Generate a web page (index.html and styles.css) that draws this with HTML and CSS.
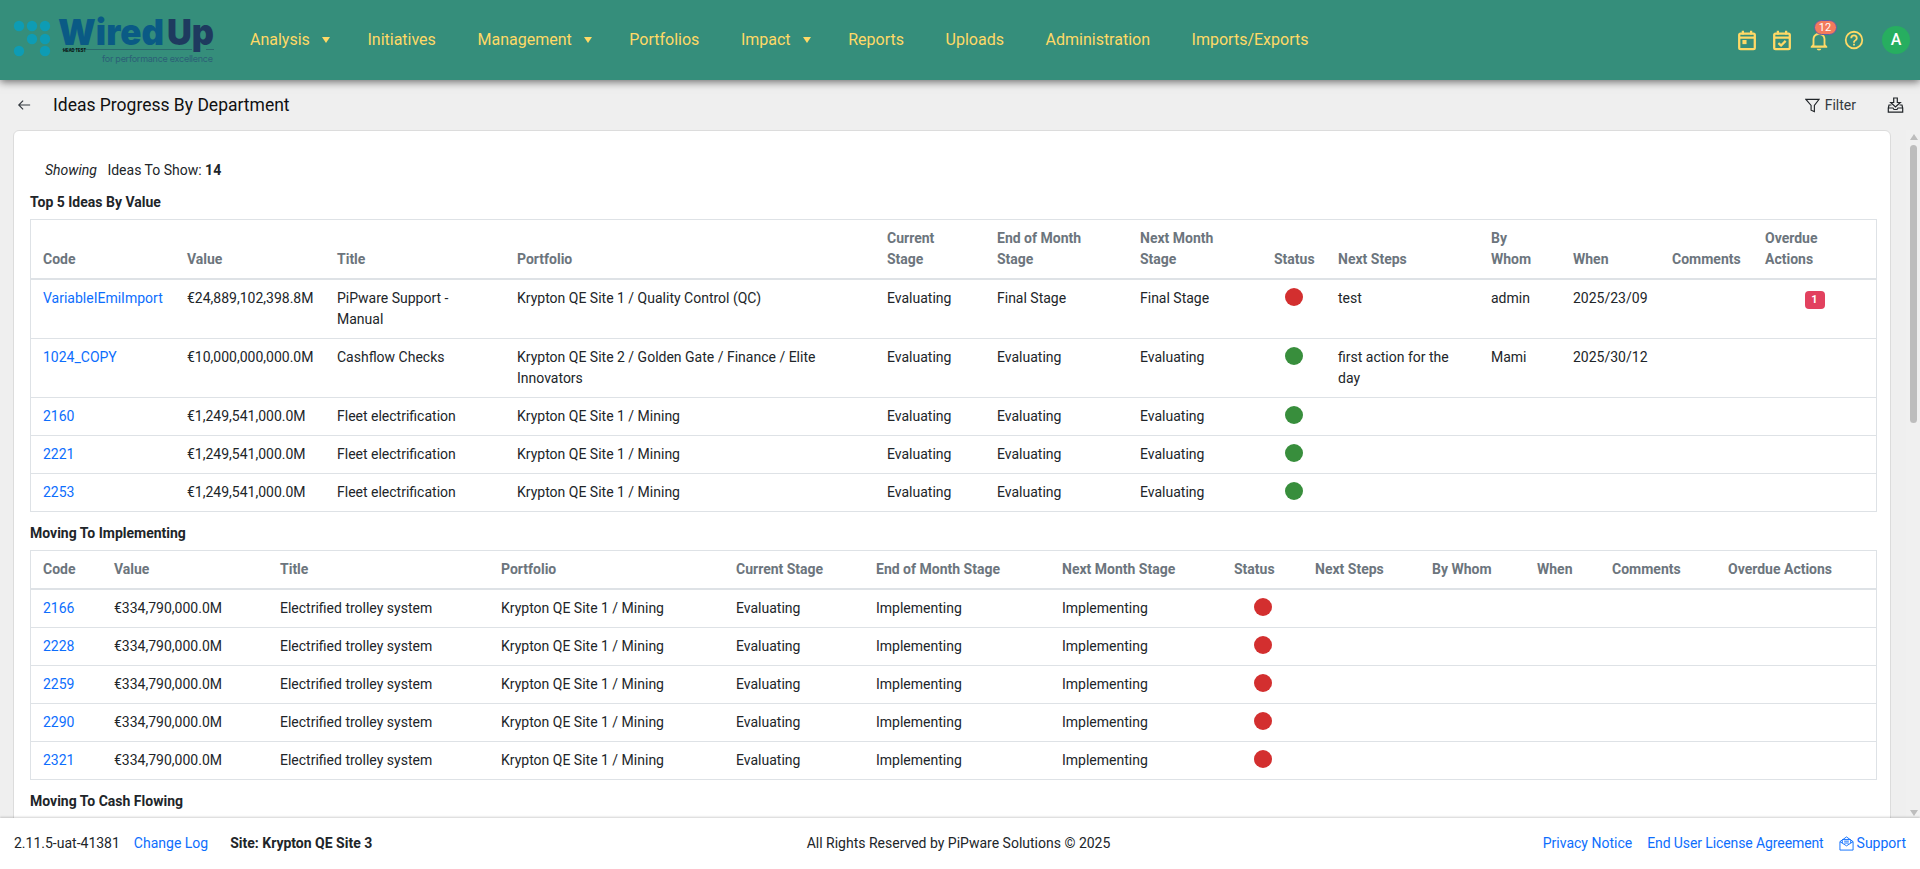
FILE: index.html
```html
<!DOCTYPE html>
<html lang="en">
<head>
<meta charset="utf-8">
<title>Ideas Progress By Department</title>
<link rel="stylesheet" href="styles.css">
</head>
<body>
<header class="topbar">
  <svg class="logo" viewBox="0 0 240 80" width="240" height="80">
    <g class="logo-dots">
      <circle cx="19" cy="26" r="5.2"/><circle cx="32" cy="26" r="5.2"/><circle cx="45" cy="26" r="5.2"/>
      <circle cx="32" cy="39" r="5.2"/><circle cx="45" cy="39" r="5.2"/>
      <circle cx="19" cy="51" r="5.2"/><circle cx="45" cy="51" r="5.2"/>
    </g>
    <text class="logo-wired" x="58" y="45" textLength="106" lengthAdjust="spacingAndGlyphs">Wired</text>
    <text class="logo-up" x="167" y="45" textLength="47" lengthAdjust="spacingAndGlyphs">Up</text>
    <path class="logo-rule" d="M62 49.5H192M206 49.5H214"/>
    <text class="logo-head" x="63" y="52" textLength="23" lengthAdjust="spacingAndGlyphs">HEAD TEST</text>
    <text class="logo-tag" x="102" y="62" textLength="111">for performance excellence</text>
  </svg>
  <nav class="mainnav">
    <a class="navitem">Analysis<span class="caret"></span></a>
    <a class="navitem">Initiatives</a>
    <a class="navitem">Management<span class="caret"></span></a>
    <a class="navitem">Portfolios</a>
    <a class="navitem">Impact<span class="caret"></span></a>
    <a class="navitem">Reports</a>
    <a class="navitem">Uploads</a>
    <a class="navitem">Administration</a>
    <a class="navitem">Imports/Exports</a>
  </nav>
  <div class="tools">
    <svg class="ticon" viewBox="0 0 24 24"><rect x="3.500" y="5" width="17" height="17" rx="1.500"/><path d="M3.500 9.500h17M7.500 2v4M16.500 2v4"/><rect class="solid" x="7" y="12" width="4.500" height="4.500"/></svg>
    <svg class="ticon" viewBox="0 0 24 24"><rect x="3.500" y="5" width="17" height="17" rx="1.500"/><path d="M3.500 9.500h17M7.500 2v4M16.500 2v4M8 15.500l3 2.500 5-5"/></svg>
    <span class="bell">
      <svg class="ticon" viewBox="0 0 24 24"><path class="solid" fill-rule="evenodd" d="M21,19V20.500H3V19L5,17V11C5,7.9 7.03,5.17 10,4.29C10,4.19 10,4.1 10,4A2,2 0 0,1 12,2A2,2 0 0,1 14,4C14,4.1 14,4.19 14,4.29C16.97,5.17 19,7.9 19,11V17L21,19ZM17,18V11C17,8.24 14.76,6.500 12,6.500C9.24,6.500 7,8.24 7,11V18H17ZM14.500,21.500A2.500,2 0 0,1 12,23.500A2.500,2 0 0,1 9.500,21.500H14.500Z"/></svg>
      <span class="bell-count">12</span>
    </span>
    <svg class="ticon" viewBox="0 0 24 24"><path class="solid" d="M11,18H13V16H11V18M12,2A10,10 0 0,0 2,12A10,10 0 0,0 12,22A10,10 0 0,0 22,12A10,10 0 0,0 12,2M12,20C7.59,20 4,16.41 4,12C4,7.59 7.59,4 12,4C16.41,4 20,7.59 20,12C20,16.41 16.41,20 12,20M12,6A4,4 0 0,0 8,10H10A2,2 0 0,1 12,8A2,2 0 0,1 14,10C14,12 11,11.75 11,15H13C13,12.75 16,12.5 16,10A4,4 0 0,0 12,6Z"/></svg>
    <span class="avatar">A</span>
  </div>
</header>

<div class="subbar">
  <svg class="back" viewBox="0 0 16 16"><path d="M15 8H2M7 3L2 8l5 5"/></svg>
  <h1 class="pagetitle">Ideas Progress By Department</h1>
  <div class="subactions">
    <span class="filter">
      <svg class="sicon funnel" viewBox="0 0 16 16"><path d="M1 1.500h14L10 8v6.500L6.500 13V8z"/></svg>
      Filter
    </span>
    <svg class="sicon dl" viewBox="0 0 16 16"><path d="M6.200 1h3.600v4.500h3L8 10 3.200 5.500h3z"/><path d="M4 8H1.500L.8 11v4.200h14.400V11l-.7-3H12M.8 11h4.700l1 1.500h3l1-1.500h4.700"/></svg>
  </div>
</div>

<div class="workspace">
  <main class="scroller">
    <section class="card">
      <p class="showing"><em class="showing-label">Showing</em> Ideas To Show: <strong>14</strong></p>

      <h2 class="sectitle">Top 5 Ideas By Value</h2>
      <div class="tablebox">
        <table class="grid first">
          <colgroup><col><col><col><col><col><col><col><col><col><col><col><col><col></colgroup>
          <thead><tr><th>Code</th><th>Value</th><th>Title</th><th>Portfolio</th><th>Current Stage</th><th>End of Month Stage</th><th>Next Month Stage</th><th>Status</th><th>Next Steps</th><th>By Whom</th><th>When</th><th>Comments</th><th>Overdue Actions</th></tr></thead>
          <tbody>
            <tr><td><a class="lnk">VariableIEmiImport</a></td><td>€24,889,102,398.8M</td><td>PiPware Support - Manual</td><td>Krypton QE Site 1 / Quality Control (QC)</td><td>Evaluating</td><td>Final Stage</td><td>Final Stage</td><td><span class="dot red"></span></td><td>test</td><td>admin</td><td>2025/23/09</td><td></td><td><span class="overdue">1</span></td></tr>
            <tr><td><a class="lnk">1024_COPY</a></td><td>€10,000,000,000.0M</td><td>Cashflow Checks</td><td>Krypton QE Site 2 / Golden Gate / Finance / Elite Innovators</td><td>Evaluating</td><td>Evaluating</td><td>Evaluating</td><td><span class="dot green"></span></td><td>first action for the day</td><td>Mami</td><td>2025/30/12</td><td></td><td></td></tr>
            <tr><td><a class="lnk">2160</a></td><td>€1,249,541,000.0M</td><td>Fleet electrification</td><td>Krypton QE Site 1 / Mining</td><td>Evaluating</td><td>Evaluating</td><td>Evaluating</td><td><span class="dot green"></span></td><td></td><td></td><td></td><td></td><td></td></tr>
            <tr><td><a class="lnk">2221</a></td><td>€1,249,541,000.0M</td><td>Fleet electrification</td><td>Krypton QE Site 1 / Mining</td><td>Evaluating</td><td>Evaluating</td><td>Evaluating</td><td><span class="dot green"></span></td><td></td><td></td><td></td><td></td><td></td></tr>
            <tr><td><a class="lnk">2253</a></td><td>€1,249,541,000.0M</td><td>Fleet electrification</td><td>Krypton QE Site 1 / Mining</td><td>Evaluating</td><td>Evaluating</td><td>Evaluating</td><td><span class="dot green"></span></td><td></td><td></td><td></td><td></td><td></td></tr>
          </tbody>
        </table>
      </div>

      <h2 class="sectitle">Moving To Implementing</h2>
      <div class="tablebox">
        <table class="grid second">
          <colgroup><col><col><col><col><col><col><col><col><col><col><col><col><col></colgroup>
          <thead><tr><th>Code</th><th>Value</th><th>Title</th><th>Portfolio</th><th>Current Stage</th><th>End of Month Stage</th><th>Next Month Stage</th><th>Status</th><th>Next Steps</th><th>By Whom</th><th>When</th><th>Comments</th><th>Overdue Actions</th></tr></thead>
          <tbody>
            <tr><td><a class="lnk">2166</a></td><td>€334,790,000.0M</td><td>Electrified trolley system</td><td>Krypton QE Site 1 / Mining</td><td>Evaluating</td><td>Implementing</td><td>Implementing</td><td><span class="dot red"></span></td><td></td><td></td><td></td><td></td><td></td></tr>
            <tr><td><a class="lnk">2228</a></td><td>€334,790,000.0M</td><td>Electrified trolley system</td><td>Krypton QE Site 1 / Mining</td><td>Evaluating</td><td>Implementing</td><td>Implementing</td><td><span class="dot red"></span></td><td></td><td></td><td></td><td></td><td></td></tr>
            <tr><td><a class="lnk">2259</a></td><td>€334,790,000.0M</td><td>Electrified trolley system</td><td>Krypton QE Site 1 / Mining</td><td>Evaluating</td><td>Implementing</td><td>Implementing</td><td><span class="dot red"></span></td><td></td><td></td><td></td><td></td><td></td></tr>
            <tr><td><a class="lnk">2290</a></td><td>€334,790,000.0M</td><td>Electrified trolley system</td><td>Krypton QE Site 1 / Mining</td><td>Evaluating</td><td>Implementing</td><td>Implementing</td><td><span class="dot red"></span></td><td></td><td></td><td></td><td></td><td></td></tr>
            <tr><td><a class="lnk">2321</a></td><td>€334,790,000.0M</td><td>Electrified trolley system</td><td>Krypton QE Site 1 / Mining</td><td>Evaluating</td><td>Implementing</td><td>Implementing</td><td><span class="dot red"></span></td><td></td><td></td><td></td><td></td><td></td></tr>
          </tbody>
        </table>
      </div>

      <h2 class="sectitle">Moving To Cash Flowing</h2>
      <div class="tablebox tail"></div>
    </section>
  </main>
  <div class="vbar">
    <span class="vbar-btn up"></span>
    <span class="vbar-thumb"></span>
    <span class="vbar-track"></span>
    <span class="vbar-btn down"></span>
  </div>
</div>

<footer class="footer">
  <div class="foot-left">
    <span>2.11.5-uat-41381</span>
    <a class="lnk changelog">Change Log</a>
    <strong class="site">Site: Krypton QE Site 3</strong>
  </div>
  <div class="foot-mid">All Rights Reserved by PiPware Solutions © 2025</div>
  <div class="foot-right">
    <a class="lnk">Privacy Notice</a>
    <a class="lnk eula">End User License Agreement</a>
    <a class="lnk support"><svg class="mail" viewBox="0 0 16 16"><path d="M1 6l7-5 7 5v9H1zM1 6l7 4.500L15 6M3.500 4.500v3M12.500 4.500v3M3.500 3.800h9M5.500 5.500h5M5.500 7.500h5"/></svg>Support</a>
  </div>
</footer>
</body>
</html>
```

FILE: styles.css
```css
* { box-sizing: border-box; }
html, body { height: 100%; }
body {
  margin: 0;
  height: 100vh;
  display: flex;
  flex-direction: column;
  overflow: hidden;
  background: #efefef;
  color: #212529;
  font: 400 14px/21px Roboto, "Liberation Sans", sans-serif;
}

/* top bar */
.topbar {
  flex: 0 0 80px;
  display: flex;
  align-items: center;
  background: #358e7b;
  box-shadow: 0 2px 8px rgba(0, 0, 0, .55);
  position: relative;
  z-index: 3;
}
.logo { flex: none; display: block; }
.logo-dots { fill: #0e9cb4; }
.logo-wired, .logo-up { font: 900 36px Inter, "Liberation Sans", sans-serif; }
.logo-wired { fill: #0a5a85; }
.logo-up { fill: #1e3a5f; }
.logo-rule { stroke: #2a6a6c; stroke-width: 1; fill: none; }
.logo-head { font: 700 4.500px "Liberation Sans", sans-serif; fill: #000; }
.logo-tag { font: 400 9px Inter, "Liberation Sans", sans-serif; fill: #2c6077; }

.mainnav { display: flex; align-items: center; padding-left: 10px; margin-top: -1px; }
.navitem {
  display: flex;
  align-items: center;
  margin-right: 41.600px;
  font-size: 16px;
  color: #ffd966;
  white-space: nowrap;
}
.caret {
  width: 0;
  height: 0;
  margin: 1px -4px 0 12px;
  border-left: 4px solid transparent;
  border-right: 4px solid transparent;
  border-top: 6px solid #ffd966;
}
.tools {
  margin-left: auto;
  padding-right: 10px;
  display: flex;
  align-items: center;
  gap: 13.500px;
}
.tools > :nth-child(1), .tools > :nth-child(2) { transform: translateX(-1px); }
.ticon { width: 22px; height: 22px; display: block; fill: none; stroke: #ffd966; stroke-width: 2.500; }
.ticon .solid { fill: #ffd966; stroke: none; }
.bell { position: relative; display: block; }
.bell-count {
  position: absolute;
  left: 6px;
  top: -9px;
  width: 23px;
  height: 15px;
  border: 1px solid #5b5fa6;
  border-radius: 8px;
  background: #f37a5c;
  color: #fff;
  font-size: 11px;
  line-height: 13px;
  text-align: center;
}
.avatar {
  width: 28px;
  height: 28px;
  margin-left: 3.500px;
  border-radius: 50%;
  background: #27ae60;
  color: #fff;
  font-size: 16px;
  font-weight: 500;
  line-height: 28px;
  text-align: center;
}

/* sub bar */
.subbar {
  flex: 0 0 50px;
  display: flex;
  align-items: center;
  padding: 0 16px 0 17px;
}
.back { width: 14px; height: 14px; fill: none; stroke: #343a40; stroke-width: 1.300; }
.pagetitle { margin: 0 0 0 22px; font-size: 17.500px; font-weight: 400; line-height: 24px; color: #111; }
.subactions { margin-left: auto; display: flex; align-items: center; gap: 31px; }
.filter { display: flex; align-items: center; gap: 5px; color: #343a40; }
.sicon { width: 17px; height: 16px; display: block; fill: none; stroke: #212529; stroke-width: 1.200; }
.funnel { width: 15px; height: 15px; }

/* scrolling content */
.workspace { flex: 1 1 0; min-height: 0; display: flex; }
.scroller {
  flex: 1 1 0;
  min-width: 0;
  overflow: hidden;
  padding: 0 15px 0 13px;
}
.vbar {
  flex: 0 0 14px;
  display: flex;
  flex-direction: column;
  background: #f0f0f0;
}
.vbar-btn { flex: 0 0 15px; display: flex; justify-content: center; }
.vbar-btn::before {
  content: "";
  width: 0;
  height: 0;
  margin-left: 1px;
  border-left: 4.500px solid transparent;
  border-right: 4.500px solid transparent;
}
.vbar-btn.up { align-items: flex-end; padding-bottom: 5px; }
.vbar-btn.up::before { border-bottom: 6px solid #bdbdbd; }
.vbar-btn.down { align-items: flex-end; padding-bottom: 2px; }
.vbar-btn.down::before { border-top: 6px solid #bdbdbd; }
.vbar-thumb { flex: 0 0 278px; margin: 0 3px 0 4px; border-radius: 4px; background: #bdbdbd; }
.vbar-track { flex: 1 1 0; }

.card {
  min-height: 720px;
  padding: 29px 13px 0 16px;
  background: #fff;
  border: 1px solid #dcdcdc;
  border-radius: 6px;
}
.showing { margin: 0 0 10px; padding-left: 15px; }
.showing-label { margin-right: 7px; }
.sectitle { margin: 0 0 6px; padding-top: 1px; font-size: 14px; font-weight: 700; line-height: 21px; }
.tablebox { border: 1px solid #dee2e6; margin-bottom: 10px; }
.tail { height: 60px; }
.grid { width: 100%; table-layout: fixed; border-collapse: separate; border-spacing: 0; }
.grid th, .grid td { padding: 8px 12px; text-align: left; border-bottom: 1px solid #dee2e6; overflow-wrap: break-word; }
.grid th { vertical-align: bottom; color: #6c757d; font-weight: 700; border-bottom-width: 2px; }
.grid td { vertical-align: top; }
.grid td:nth-child(2) { white-space: nowrap; }
.grid tbody tr:last-child td { border-bottom: 0; }
.lnk { color: #0d6efd; text-decoration: none; }

.first col:nth-child(1) { width: 144px; }
.first col:nth-child(2) { width: 150px; }
.first col:nth-child(3) { width: 180px; }
.first col:nth-child(4) { width: 370px; }
.first col:nth-child(5) { width: 110px; }
.first col:nth-child(6) { width: 143px; }
.first col:nth-child(7) { width: 134px; }
.first col:nth-child(8) { width: 64px; }
.first col:nth-child(9) { width: 153px; }
.first col:nth-child(10) { width: 82px; }
.first col:nth-child(11) { width: 99px; }
.first col:nth-child(12) { width: 93px; }
.first col:nth-child(13) { width: 123px; }
.second col:nth-child(1) { width: 71px; }
.second col:nth-child(2) { width: 166px; }
.second col:nth-child(3) { width: 221px; }
.second col:nth-child(4) { width: 235px; }
.second col:nth-child(5) { width: 140px; }
.second col:nth-child(6) { width: 186px; }
.second col:nth-child(7) { width: 172px; }
.second col:nth-child(8) { width: 81px; }
.second col:nth-child(9) { width: 117px; }
.second col:nth-child(10) { width: 105px; }
.second col:nth-child(11) { width: 75px; }
.second col:nth-child(12) { width: 116px; }
.second col:nth-child(13) { width: 160px; }
.grid th:nth-child(8), .grid td:nth-child(8) { padding-left: 6px; padding-right: 6px; }
.first th:nth-child(8) { padding-left: 12px; padding-right: 0; }
.second th:nth-child(8) { padding-left: 12px; }

.dot { display: block; width: 18px; height: 18px; margin: 0 auto; border-radius: 50%; }
.red { background: #d32f2f; }
.green { background: #388e3c; }
.overdue {
  display: block;
  width: 20px;
  height: 18px;
  margin: 3px auto 0;
  border-radius: 4px;
  background: #e2415f;
  color: #fff;
  font-size: 11px;
  font-weight: 700;
  line-height: 18px;
  text-align: center;
}

/* footer */
.footer {
  flex: 0 0 51px;
  display: grid;
  grid-template-columns: 1fr auto 1fr;
  align-items: center;
  padding: 0 14px;
  background: #fff;
  box-shadow: 0 -1px 2px rgba(0, 0, 0, .18);
  position: relative;
  z-index: 2;
}
.foot-left { display: flex; align-items: center; }
.changelog { margin-left: 14px; }
.site { margin-left: 22px; }
.foot-mid { margin-right: 3px; }
.foot-right { display: flex; align-items: center; justify-content: flex-end; gap: 15px; }
.eula { letter-spacing: -0.100px; }
.support { display: flex; align-items: center; gap: 3px; }
.mail { width: 15px; height: 15px; fill: none; stroke: #0d6efd; stroke-width: 1; }
```
